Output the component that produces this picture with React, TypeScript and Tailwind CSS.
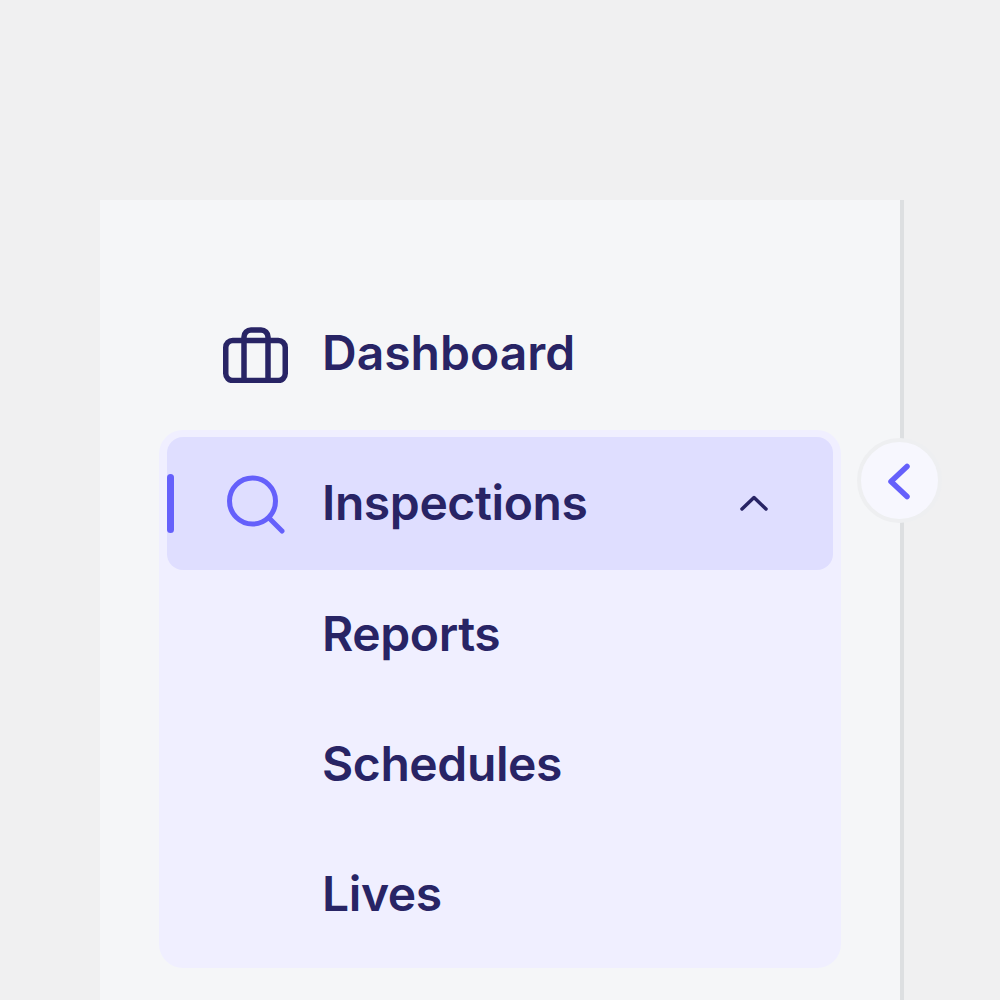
import React from "react";

function Briefcase() {
  return (
    <svg width="66" height="58" viewBox="0 0 66 58" fill="none" stroke="#282465" strokeWidth="5.5" strokeLinejoin="round" strokeLinecap="round">
      <rect x="2.75" y="15.5" width="59.5" height="40" rx="7" />
      <path d="M21 55.5V12a7 7 0 0 1 7-7h10a7 7 0 0 1 7 7v43.5" />
    </svg>
  );
}

function Search() {
  return (
    <svg width="60" height="60" viewBox="0 0 60 60" fill="none" stroke="#6560fb" strokeWidth="5" strokeLinecap="round">
      <circle cx="25.5" cy="27" r="23" />
      <path d="M43 45L55 57" />
    </svg>
  );
}

export default function App() {
  return (
    <div className="relative w-[1000px] h-[1000px] overflow-hidden bg-[#f0f0f1] pt-[200px] pl-[100px] font-['Inter','Liberation_Sans',sans-serif]">
      <div className="relative w-[804px] h-[800px] bg-[#f5f6f8] border-r-4 border-[#dddfe1] pt-[89px] px-[59px]">
        <div className="flex items-center h-[130px] pl-[64px] text-[#282465] text-[48px] font-semibold">
          <span className="w-[99px] shrink-0 flex"><Briefcase /></span>
          <span className="mb-[2px]">Dashboard</span>
        </div>
        <div className="mt-[11px] w-[682px] h-[538px] rounded-[24px] bg-[#f0efff] pt-[7px] px-[8px] text-[#282465] text-[48px] font-semibold tracking-[-0.4px]">
          <div className="relative flex items-center h-[133px] rounded-[16px] bg-[#dfdeff] pl-[60px] pr-[64px]">
            <div className="absolute left-0 top-[37px] w-[7px] h-[59px] rounded-full bg-[#6560fb]" />
            <span className="w-[95px] shrink-0 flex"><Search /></span>
            <span className="flex-1 mb-[2px]">Inspections</span>
            <svg width="30" height="18" viewBox="0 0 30 18" fill="none" stroke="#282465" strokeWidth="3.5" strokeLinecap="round" strokeLinejoin="round">
              <path d="M3 14L15 2.5L27 14" />
            </svg>
          </div>
          <div className="pl-[155px]">
            <div className="flex items-center h-[130px] pb-[2px]">Reports</div>
            <div className="flex items-center h-[130px] pb-[2px]">Schedules</div>
            <div className="flex items-center h-[130px] pb-[2px]">Lives</div>
          </div>
        </div>
        <button className="absolute left-[757px] top-[238px] w-[85px] h-[85px] rounded-full bg-[#f7f7fe] border-4 border-[#eeeff1] flex items-center justify-center">
          <svg width="26" height="40" viewBox="0 0 26 40" fill="none" stroke="#6560fb" strokeWidth="5.5" strokeLinecap="round" strokeLinejoin="round">
            <path d="M20 5.5L4 20.5L20 35.5" />
          </svg>
        </button>
      </div>
    </div>
  );
}
